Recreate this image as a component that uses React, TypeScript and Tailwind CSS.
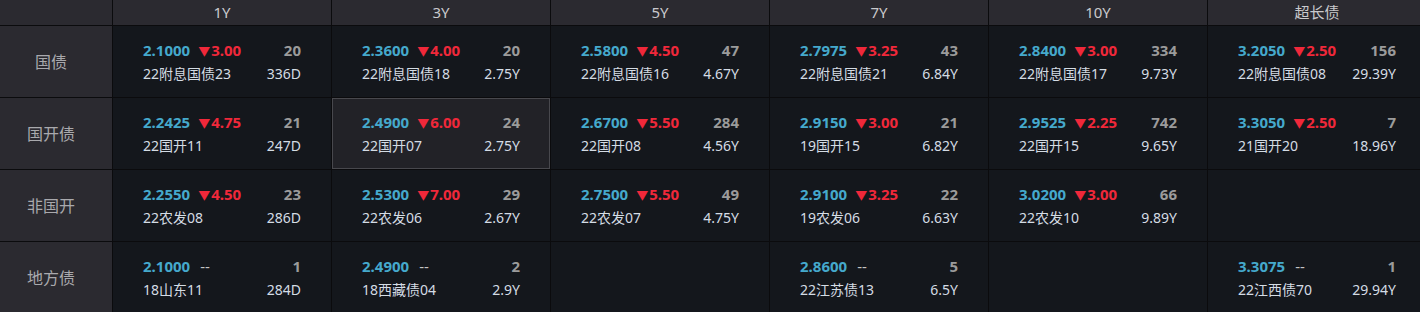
import { Fragment } from "react"

type Quote = {
  yld: string
  chg: string | null
  cnt: string
  name: string
  term: string
}

const tenors = ["1Y", "3Y", "5Y", "7Y", "10Y", "超长债"]

const rows: { label: string; cells: (Quote | null)[] }[] = [
  {
    label: "国债",
    cells: [
      { yld: "2.1000", chg: "3.00", cnt: "20", name: "22附息国债23", term: "336D" },
      { yld: "2.3600", chg: "4.00", cnt: "20", name: "22附息国债18", term: "2.75Y" },
      { yld: "2.5800", chg: "4.50", cnt: "47", name: "22附息国债16", term: "4.67Y" },
      { yld: "2.7975", chg: "3.25", cnt: "43", name: "22附息国债21", term: "6.84Y" },
      { yld: "2.8400", chg: "3.00", cnt: "334", name: "22附息国债17", term: "9.73Y" },
      { yld: "3.2050", chg: "2.50", cnt: "156", name: "22附息国债08", term: "29.39Y" },
    ],
  },
  {
    label: "国开债",
    cells: [
      { yld: "2.2425", chg: "4.75", cnt: "21", name: "22国开11", term: "247D" },
      { yld: "2.4900", chg: "6.00", cnt: "24", name: "22国开07", term: "2.75Y" },
      { yld: "2.6700", chg: "5.50", cnt: "284", name: "22国开08", term: "4.56Y" },
      { yld: "2.9150", chg: "3.00", cnt: "21", name: "19国开15", term: "6.82Y" },
      { yld: "2.9525", chg: "2.25", cnt: "742", name: "22国开15", term: "9.65Y" },
      { yld: "3.3050", chg: "2.50", cnt: "7", name: "21国开20", term: "18.96Y" },
    ],
  },
  {
    label: "非国开",
    cells: [
      { yld: "2.2550", chg: "4.50", cnt: "23", name: "22农发08", term: "286D" },
      { yld: "2.5300", chg: "7.00", cnt: "29", name: "22农发06", term: "2.67Y" },
      { yld: "2.7500", chg: "5.50", cnt: "49", name: "22农发07", term: "4.75Y" },
      { yld: "2.9100", chg: "3.25", cnt: "22", name: "19农发06", term: "6.63Y" },
      { yld: "3.0200", chg: "3.00", cnt: "66", name: "22农发10", term: "9.89Y" },
      null,
    ],
  },
  {
    label: "地方债",
    cells: [
      { yld: "2.1000", chg: null, cnt: "1", name: "18山东11", term: "284D" },
      { yld: "2.4900", chg: null, cnt: "2", name: "18西藏债04", term: "2.9Y" },
      null,
      { yld: "2.8600", chg: null, cnt: "5", name: "22江苏债13", term: "6.5Y" },
      null,
      { yld: "3.3075", chg: null, cnt: "1", name: "22江西债70", term: "29.94Y" },
    ],
  },
]

function QuoteCell({ q, active }: { q: Quote | null; active?: boolean }) {
  return (
    <div
      className={
        active
          ? "h-[71px] bg-[#222227] border border-[#48484d] flex flex-col justify-center pl-[29px]"
          : "h-[71px] bg-[#14171c] flex flex-col justify-center pl-[30px]"
      }
    >
      {q && (
        <div className="w-[158px] flex flex-col gap-[4px]">
          <div className="flex items-center h-[19px] text-[15px] font-bold">
            <span className="text-[#45a9cc]">{q.yld}</span>
            {q.chg ? (
              <span className="ml-[8px] text-[#f0283a]">
                <span className="text-[12px] mr-[1px]">▼</span>
                {q.chg}
              </span>
            ) : (
              <span className="ml-[10px] text-[#c4c4c4] font-normal">--</span>
            )}
            <span className="ml-auto text-[#9b9b9b]">{q.cnt}</span>
          </div>
          <div className="flex items-center h-[19px] text-[14px] text-[#d4dce4]">
            <span>{q.name}</span>
            <span className="ml-auto">{q.term}</span>
          </div>
        </div>
      )}
    </div>
  )
}

export default function App() {
  return (
    <div
      className="w-[1420px] h-[312px] overflow-hidden bg-[#0b0b0d]"
      style={{ fontFamily: '"Noto Sans", "Noto Sans CJK SC", sans-serif' }}
    >
      <div className="grid grid-cols-[112px_repeat(6,218px)] gap-px w-[1427px] bg-[#0b0b0d]">
        <div className="h-[25px] bg-[#2b2a30]" />
        {tenors.map((t) => (
          <div
            key={t}
            className="h-[25px] bg-[#2b2a30] flex items-center justify-center text-[15px] text-[#c9c9cc]"
          >
            {t}
          </div>
        ))}
        {rows.map((r, ri) => (
          <Fragment key={r.label}>
            <div className="h-[71px] bg-[#2b2a30] flex items-center justify-center pr-[10px] text-[16px] text-[#a9a9ad]">
              {r.label}
            </div>
            {r.cells.map((c, ci) => (
              <QuoteCell key={ci} q={c} active={ri === 1 && ci === 1} />
            ))}
          </Fragment>
        ))}
      </div>
    </div>
  )
}
